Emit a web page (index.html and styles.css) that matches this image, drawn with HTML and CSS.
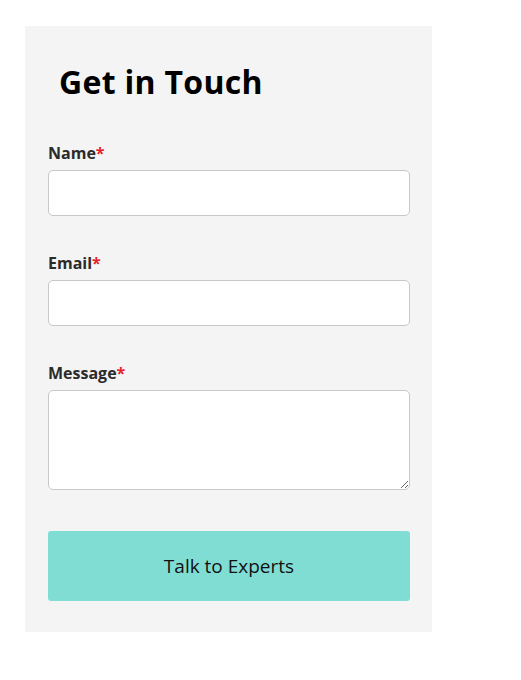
FILE: index.html
```html
<!DOCTYPE html>
<html lang="en">
<head>
<meta charset="utf-8">
<title>Get in Touch</title>
<link rel="stylesheet" href="styles.css">
</head>
<body>
<div class="panel">
  <h2 class="title">Get in Touch</h2>
  <form class="form">
    <div class="field">
      <label class="label">Name<span class="req">*</span></label>
      <input class="input" type="text">
    </div>
    <div class="field">
      <label class="label">Email<span class="req">*</span></label>
      <input class="input" type="email">
    </div>
    <div class="field">
      <label class="label">Message<span class="req">*</span></label>
      <textarea class="textarea"></textarea>
    </div>
    <button class="btn" type="button">Talk to Experts</button>
  </form>
</div>
</body>
</html>
```
FILE: styles.css
```css
html, body {
  margin: 0;
  padding: 0;
  background: #ffffff;
}
body {
  padding: 26px 0 0 25px;
  font-family: "Open Sans", "Noto Sans", sans-serif;
}
.panel {
  width: 407px;
  height: 606px;
  box-sizing: border-box;
  background: #f4f4f4;
  padding: 36px 22px 0 23px;
}
.title {
  margin: 0 0 0 11px;
  font-size: 32px;
  font-weight: 700;
  line-height: 40px;
  color: #000;
  letter-spacing: 0.3px;
}
.form {
  margin-top: 41px;
  display: flex;
  flex-direction: column;
}
.field {
  display: flex;
  flex-direction: column;
  margin-bottom: 37px;
}
.label {
  font-size: 16px;
  font-weight: 700;
  color: #2b2b2b;
  line-height: 21px;
  margin-bottom: 6px;
}
.req {
  color: #e8202a;
}
.input, .textarea {
  box-sizing: border-box;
  width: 362px;
  border: 1px solid #c8c8c8;
  border-radius: 5px;
  background: #fff;
  margin: 0;
  font-family: inherit;
}
.input {
  height: 46px;
}
.textarea {
  height: 100px;
  resize: vertical;
}
.btn {
  width: 362px;
  height: 70px;
  margin-top: 4px;
  border: none;
  border-radius: 3px;
  background: #80ddd4;
  color: #111;
  font-family: inherit;
  font-size: 19px;
  font-weight: 400;
}
```
